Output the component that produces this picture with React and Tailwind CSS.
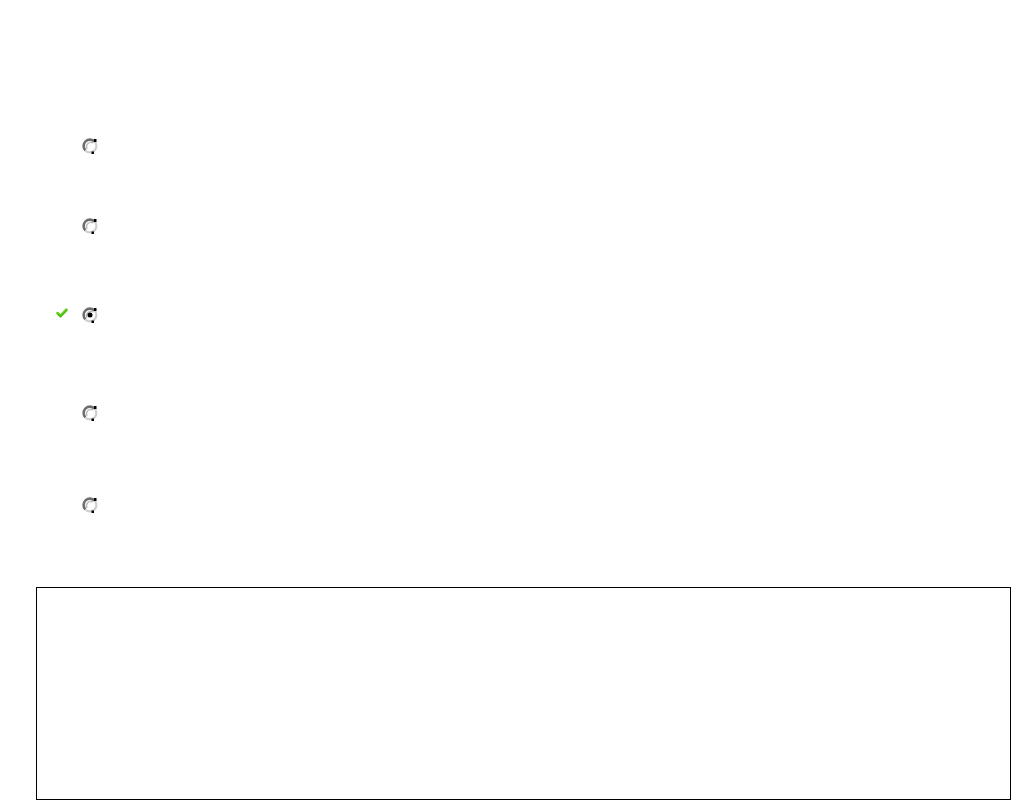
import React from 'react'

function Radio({ checked }) {
  return (
    <svg width="16" height="16" viewBox="0 0 16 16" className="block">
      <circle cx="8" cy="8" r="6.3" fill="#fff" />
      <path d="M12.6 3.6 A6.3 6.3 0 0 0 3.4 12.4" fill="none" stroke="#6e6e6e" strokeWidth="2.6" />
      <path d="M11 5 A4.4 4.4 0 0 0 5 11" fill="none" stroke="#b8b8b8" strokeWidth="1.2" />
      <path d="M3.4 12.4 A6.3 6.3 0 0 0 12.6 3.6" fill="none" stroke="#cfcfcf" strokeWidth="2.2" />
      <rect x="12" y="1" width="2.5" height="3" fill="#000" />
      <rect x="9.5" y="13.5" width="2.5" height="2.5" fill="#000" />
      {checked && <circle cx="8" cy="8" r="2.5" fill="#000" />}
    </svg>
  )
}

function Check() {
  return (
    <svg width="12" height="10" viewBox="0 0 12 10" className="block -mt-[4px]">
      <path d="M1.6 5.2 L4.5 8 L10.4 1.8" fill="none" stroke="#5fcf1a" strokeWidth="2.8" strokeLinecap="round" strokeLinejoin="round" />
      <path d="M2.2 6.6 L4.5 8.8 L10.5 3" fill="none" stroke="#3a9a10" strokeWidth="0.8" strokeLinecap="round" />
    </svg>
  )
}

function Row({ checked, mt }) {
  return (
    <div className={`flex items-center h-[16px] ${mt}`}>
      <div className="w-[26px] flex justify-start">{checked && <Check />}</div>
      <Radio checked={checked} />
    </div>
  )
}

export default function App() {
  return (
    <div className="w-full h-[800px] bg-white overflow-hidden" style={{ fontFamily: '"Liberation Sans", Arial, sans-serif' }}>
      <div className="pt-[138px] pl-[56px]">
        <Row mt="" />
        <Row mt="mt-[64px]" />
        <Row checked mt="mt-[73px]" />
        <Row mt="mt-[82px]" />
        <Row mt="mt-[76px]" />
      </div>
      <div className="mt-[74px] ml-[36px] w-[975px] h-[213px] border border-black" />
    </div>
  )
}
